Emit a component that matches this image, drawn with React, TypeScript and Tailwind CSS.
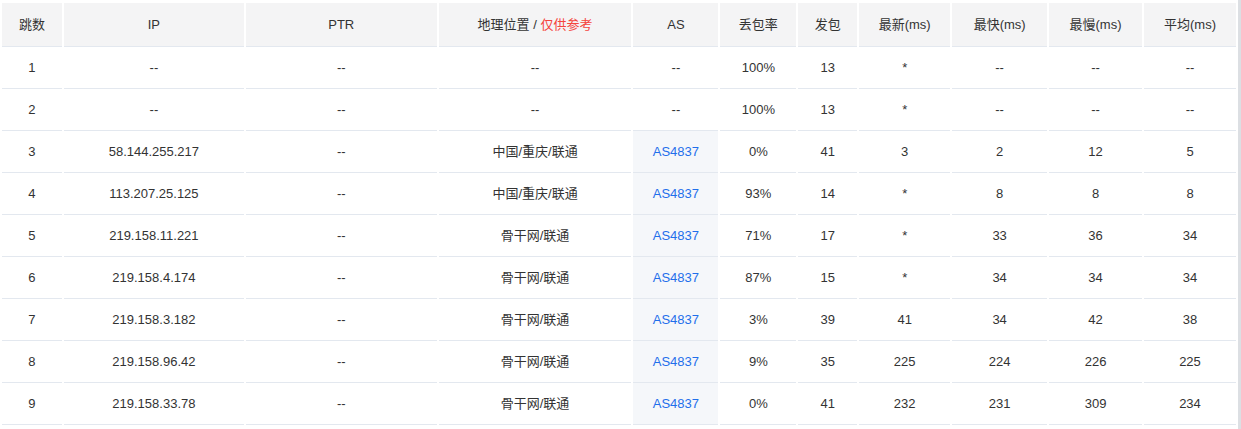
const cols = [
  { label: "跳数", w: 60 },
  { label: "IP", w: 180 },
  { label: "PTR", w: 191 },
  { label: "geo", w: 193 },
  { label: "AS", w: 85 },
  { label: "丢包率", w: 76 },
  { label: "发包", w: 59 },
  { label: "最新(ms)", w: 91 },
  { label: "最快(ms)", w: 95 },
  { label: "最慢(ms)", w: 93 },
  { label: "平均(ms)", w: 92 },
];

const rows = [
  ["1", "--", "--", "--", "--", "100%", "13", "*", "--", "--", "--"],
  ["2", "--", "--", "--", "--", "100%", "13", "*", "--", "--", "--"],
  ["3", "58.144.255.217", "--", "中国/重庆/联通", "AS4837", "0%", "41", "3", "2", "12", "5"],
  ["4", "113.207.25.125", "--", "中国/重庆/联通", "AS4837", "93%", "14", "*", "8", "8", "8"],
  ["5", "219.158.11.221", "--", "骨干网/联通", "AS4837", "71%", "17", "*", "33", "36", "34"],
  ["6", "219.158.4.174", "--", "骨干网/联通", "AS4837", "87%", "15", "*", "34", "34", "34"],
  ["7", "219.158.3.182", "--", "骨干网/联通", "AS4837", "3%", "39", "41", "34", "42", "38"],
  ["8", "219.158.96.42", "--", "骨干网/联通", "AS4837", "9%", "35", "225", "224", "226", "225"],
  ["9", "219.158.33.78", "--", "骨干网/联通", "AS4837", "0%", "41", "232", "231", "309", "234"],
  ["", "", "", "", "", "", "", "", "", "", ""],
];

export default function App() {
  return (
    <div
      className="w-[1241px] h-[429px] overflow-hidden bg-white flex"
      style={{ fontFamily: "'Helvetica Neue', 'Liberation Sans', 'Noto Sans CJK SC', sans-serif" }}
    >
      <div className="flex-1 pt-[3px]">
        <table className="border-separate border-spacing-x-[2px] border-spacing-y-0 table-fixed text-[13px] text-[#333]">
          <colgroup>
            {cols.map((c, i) => (
              <col key={i} style={{ width: c.w }} />
            ))}
          </colgroup>
          <thead>
            <tr>
              {cols.map((c, i) => (
                <th
                  key={i}
                  className="h-[44px] bg-[#f4f4f5] font-normal text-center border-b border-[#e3e8ef] text-[#333]"
                >
                  {c.label === "geo" ? (
                    <>
                      地理位置 / <span className="text-[#f5453d]">仅供参考</span>
                    </>
                  ) : (
                    c.label
                  )}
                </th>
              ))}
            </tr>
          </thead>
          <tbody>
            {rows.map((r, ri) => (
              <tr key={ri}>
                {r.map((v, ci) => (
                  <td
                    key={ci}
                    className={`h-[42px] text-center border-b border-[#e3e8ef] ${
                      ci === 4 && v.startsWith("AS") ? "bg-[#f5f7fa] text-[#1f6feb]" : ""
                    }`}
                  >
                    {v}
                  </td>
                ))}
              </tr>
            ))}
          </tbody>
        </table>
      </div>
      <div className="w-[3px] bg-[#dcdfe3]" />
    </div>
  );
}
